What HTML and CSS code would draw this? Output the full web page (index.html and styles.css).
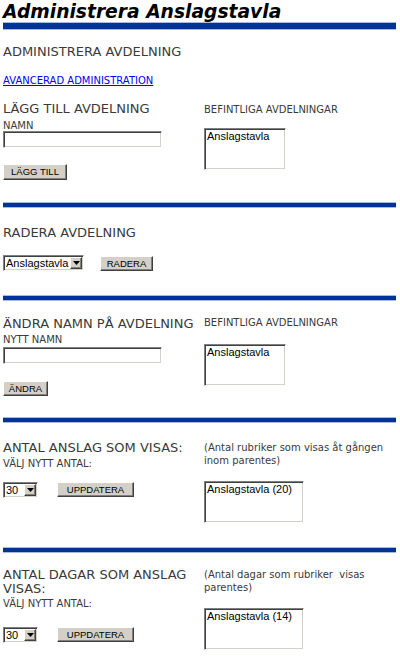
FILE: index.html
```html
<!DOCTYPE html>
<html lang="sv">
<head>
<meta charset="utf-8">
<title>Administrera Anslagstavla</title>
<link rel="stylesheet" href="styles.css">
</head>
<body>
<div class="page">
  <h1 class="title">Administrera Anslagstavla</h1>
  <div class="rule rule-thick"></div>

  <section class="sec sec-admin">
    <h2 class="heading heading-admin">ADMINISTRERA AVDELNING</h2>
    <div class="adv"><a class="adv-link" href="#">AVANCERAD ADMINISTRATION</a></div>
    <div class="row row-add">
      <div class="col-left">
        <h3 class="heading">LÄGG TILL AVDELNING</h3>
        <label class="label label-namn">NAMN</label>
        <input class="text-input" type="text">
        <button class="btn btn-add" type="button">LÄGG TILL</button>
      </div>
      <div class="col-right">
        <div class="label rlabel-add">BEFINTLIGA AVDELNINGAR</div>
        <div class="listbox lb-add">Anslagstavla</div>
      </div>
    </div>
  </section>

  <div class="rule rule-1"></div>

  <section class="sec sec-delete">
    <h2 class="heading">RADERA AVDELNING</h2>
    <div class="ctrl-row ctrl-delete">
      <span class="select select-dept"><span class="select-value">Anslagstavla</span><span class="select-arrow"><svg width="7" height="4" viewBox="0 0 7 4"><path d="M0 0h7L3.5 4z" fill="#000"/></svg></span></span>
      <button class="btn btn-delete" type="button">RADERA</button>
    </div>
  </section>

  <div class="rule rule-2"></div>

  <section class="sec sec-rename">
    <div class="row row-rename">
      <div class="col-left">
        <h2 class="heading">ÄNDRA NAMN PÅ AVDELNING</h2>
        <label class="label label-nytt">NYTT NAMN</label>
        <input class="text-input input-nytt" type="text">
        <button class="btn btn-rename" type="button">ÄNDRA</button>
      </div>
      <div class="col-right">
        <div class="label rlabel-rename">BEFINTLIGA AVDELNINGAR</div>
        <div class="listbox lb-rename">Anslagstavla</div>
      </div>
    </div>
  </section>

  <div class="rule rule-3"></div>

  <section class="sec sec-count">
    <div class="row row-count">
      <div class="col-left">
        <h2 class="heading">ANTAL ANSLAG SOM VISAS:</h2>
        <label class="label label-valj">VÄLJ NYTT ANTAL:</label>
        <div class="ctrl-row ctrl-count">
          <span class="select select-num"><span class="select-value">30</span><span class="select-arrow"><svg width="7" height="4" viewBox="0 0 7 4"><path d="M0 0h7L3.5 4z" fill="#000"/></svg></span></span>
          <button class="btn btn-update" type="button">UPPDATERA</button>
        </div>
      </div>
      <div class="col-right">
        <p class="note">(Antal rubriker som visas åt gången inom parentes)</p>
        <div class="listbox listbox-wide lb-count">Anslagstavla (20)</div>
      </div>
    </div>
  </section>

  <div class="rule rule-4"></div>

  <section class="sec sec-days">
    <div class="row row-days">
      <div class="col-left">
        <h2 class="heading">ANTAL DAGAR SOM ANSLAG VISAS:</h2>
        <label class="label label-valj2">VÄLJ NYTT ANTAL:</label>
        <div class="ctrl-row ctrl-days">
          <span class="select select-num"><span class="select-value">30</span><span class="select-arrow"><svg width="7" height="4" viewBox="0 0 7 4"><path d="M0 0h7L3.5 4z" fill="#000"/></svg></span></span>
          <button class="btn btn-update" type="button">UPPDATERA</button>
        </div>
      </div>
      <div class="col-right">
        <p class="note">(Antal dagar som rubriker&nbsp; visas parentes)</p>
        <div class="listbox listbox-wide lb-days">Anslagstavla (14)</div>
      </div>
    </div>
  </section>
</div>
</body>
</html>
```

FILE: styles.css
```css
html, body {
  margin: 0;
  padding: 0;
  background: #fff;
}

body {
  font-family: "DejaVu Sans", Verdana, sans-serif;
  color: #3a3a3a;
}

.page {
  padding: 0 4px 0 3px;
}

.title {
  margin: 2px 0 0;
  font: italic bold 18.7px/20px "DejaVu Sans", Verdana, sans-serif;
  color: #000;
}

.rule {
  height: 4px;
  background: #003399;
  box-shadow: 0 -1px 0 #a9b8dd, 0 1px 0 #a9b8dd;
}

.rule-thick {
  height: 6px;
  margin-top: 1px;
}

.heading {
  margin: 0;
  font-size: 13px;
  line-height: 14px;
  font-weight: normal;
  color: #3a3a3a;
}

.label {
  display: block;
  font-size: 10px;
  line-height: 11px;
  color: #3a3a3a;
}

.note {
  margin: 0;
  font-size: 10px;
  line-height: 13px;
  color: #3a3a3a;
}

.adv {
  font-size: 10px;
  line-height: 12px;
}

.adv-link {
  color: #0000ff;
  text-decoration: underline;
}

/* ---------- layout ---------- */
.row {
  display: grid;
  grid-template-columns: 201px 1fr;
  align-items: start;
}

.col-left,
.col-right {
  display: flex;
  flex-direction: column;
  align-items: flex-start;
}

.ctrl-row {
  display: flex;
  align-items: flex-start;
}

/* ---------- controls ---------- */
.text-input {
  box-sizing: border-box;
  width: 159px;
  height: 17px;
  margin: 0;
  padding: 0;
  background: #fff;
  border: 1px solid;
  border-color: #808080 #fff #fff #808080;
  box-shadow: inset 1px 1px 0 #404040, inset -1px -1px 0 #d4d0c8;
}

.btn {
  box-sizing: border-box;
  height: 16px;
  margin: 0;
  padding: 0;
  background: #d4d0c8;
  border: 1px solid;
  border-color: #fff #404040 #404040 #fff;
  box-shadow: inset -1px -1px 0 #808080;
  font: 9.5px/1 "Liberation Sans", Arial, sans-serif;
  color: #000;
  text-align: center;
}

.listbox {
  box-sizing: border-box;
  width: 82px;
  height: 42px;
  padding: 1px 1px 0 2px;
  background: #fff;
  border: 1px solid;
  border-color: #808080 #fff #fff #808080;
  box-shadow: inset 1px 1px 0 #404040, inset -1px -1px 0 #d4d0c8;
  font: 11px/13px "Liberation Sans", Arial, sans-serif;
  color: #000;
}

.listbox-wide { width: 100px; }

.select {
  box-sizing: border-box;
  display: flex;
  align-items: center;
  height: 16px;
  background: #fff;
  border: 1px solid;
  border-color: #808080 #fff #fff #808080;
  box-shadow: inset 1px 1px 0 #404040, inset -1px -1px 0 #d4d0c8;
}

.select-value {
  flex: 1;
  padding-left: 2px;
  font: 11px/12px "Liberation Sans", Arial, sans-serif;
  color: #000;
  white-space: nowrap;
  overflow: hidden;
}

.select-arrow {
  box-sizing: border-box;
  display: flex;
  flex: none;
  align-items: center;
  justify-content: center;
  width: 12px;
  height: 12px;
  margin-right: 1px;
  background: #d4d0c8;
  border: 1px solid;
  border-color: #fff #404040 #404040 #fff;
  box-shadow: inset -1px -1px 0 #808080;
}

.select-dept { width: 81px; }
.select-num { width: 35px; }

/* ---------- section spacing ---------- */
.heading-admin { margin-top: 16px; }
.adv { margin-top: 16px; }

.row-add { margin-top: 15px; }
.label-namn { margin-top: 4px; }
.btn-add { margin-top: 16px; width: 64px; }
.rlabel-add { margin-top: 2px; }
.lb-add { margin-top: 13px; }

.rule-1 { margin-top: 23px; }

.sec-delete .heading { margin-top: 19px; }
.ctrl-delete { margin-top: 15px; }
.btn-delete { width: 53px; margin-left: 16px; margin-top: 1px; height: 15px; }

.rule-2 { margin-top: 25px; }

.row-rename { margin-top: 17px; }
.label-nytt { margin-top: 3px; }
.input-nytt { margin-top: 2px; }
.btn-rename { width: 45px; margin-top: 17px; height: 15px; }
.rlabel-rename { margin-top: 0; }
.lb-rename { margin-top: 16px; }

.rule-3 { margin-top: 22px; }

.row-count { margin-top: 19px; }
.label-valj { margin-top: 3px; }
.ctrl-count { margin-top: 13px; }
.btn-update { width: 77px; margin-left: 19px; height: 15px; }
.lb-count { margin-top: 14px; }

.rule-4 { margin-top: 25px; }

.row-days { margin-top: 16px; }
.label-valj2 { margin-top: 2px; }
.ctrl-days { margin-top: 18px; }
.lb-days { margin-top: 14px; }
```
